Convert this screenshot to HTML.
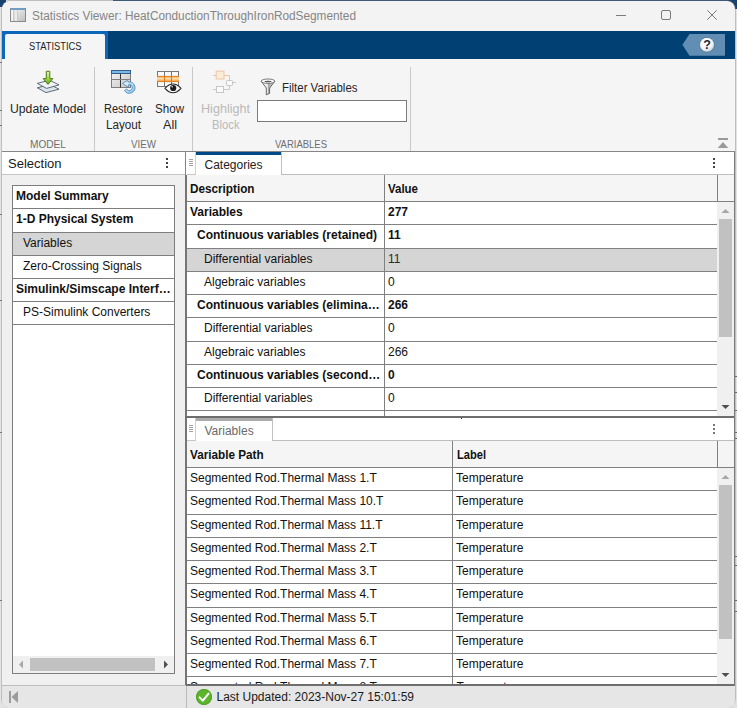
<!DOCTYPE html>
<html>
<head>
<meta charset="utf-8">
<title>Statistics Viewer</title>
<style>
*{box-sizing:border-box;margin:0;padding:0}
html,body{width:737px;height:708px;overflow:hidden;background:#e3e3e3;font-family:"Liberation Sans",sans-serif;font-size:12px;color:#1a1a1a}
.a{position:absolute;display:block}
.t{position:absolute;white-space:nowrap;transform-origin:0 50%}
svg{overflow:visible}
</style>
</head>
<body>
<div class="a" style="left:0px;top:0px;width:737px;height:708px;background:#e3e3e3;"></div>
<div class="a" style="left:0px;top:0px;width:6px;height:7px;background:#17426d;"></div>
<div class="a" style="left:113px;top:0px;width:624px;height:1px;background:#1c4a78;"></div>
<div class="a" style="left:728px;top:0px;width:9px;height:9px;background:#17426d;"></div>
<div class="a" style="left:0px;top:62px;width:2px;height:1px;background:#777;"></div>
<div class="a" style="left:0px;top:110px;width:2px;height:1px;background:#777;"></div>
<div class="a" style="left:0px;top:125px;width:2px;height:1px;background:#777;"></div>
<div class="a" style="left:0px;top:214px;width:2px;height:1px;background:#777;"></div>
<div class="a" style="left:0px;top:300px;width:2px;height:1px;background:#777;"></div>
<div class="a" style="left:0px;top:432px;width:2px;height:1px;background:#777;"></div>
<div class="a" style="left:0px;top:600px;width:2px;height:1px;background:#777;"></div>
<div class="a" style="left:735px;top:376px;width:2px;height:1px;background:#666;"></div>
<div class="a" style="left:735px;top:392px;width:2px;height:1px;background:#666;"></div>
<div class="a" style="left:735px;top:410px;width:2px;height:1px;background:#666;"></div>
<div class="a" style="left:735px;top:432px;width:2px;height:1px;background:#666;"></div>
<div class="a" style="left:735px;top:438px;width:2px;height:1px;background:#666;"></div>
<div class="a" style="left:735px;top:556px;width:2px;height:1px;background:#666;"></div>
<div class="a" style="left:735px;top:565px;width:2px;height:1px;background:#666;"></div>
<div class="a" style="left:735px;top:600px;width:2px;height:1px;background:#666;"></div>
<div class="a" style="left:735px;top:611px;width:2px;height:1px;background:#666;"></div>
<div class="a" style="left:2px;top:1px;width:733px;height:707px;background:#f3f3f3;border-radius:8px 8px 9px 9px;box-shadow:0 0 0 1px rgba(120,120,120,.35)"></div>
<svg class="a" style="left:9px;top:7px" width="18" height="16" viewBox="0 0 18 16">
<defs><linearGradient id="ti" x1="0" y1="0" x2="1" y2="1"><stop offset="0" stop-color="#fafafa"/><stop offset="1" stop-color="#bdbdbd"/></linearGradient></defs>
<rect x="1.5" y="1.5" width="15" height="13" fill="url(#ti)" stroke="#8a8a8a"/>
<rect x="1.5" y="1" width="15" height="2" fill="#6f9cc4"/>
<rect x="2.5" y="3.5" width="2" height="10.5" fill="#f6f6f6"/><rect x="4.5" y="3.5" width="1" height="10.5" fill="#a8a8a8"/><rect x="5.5" y="3.5" width="2.5" height="10.5" fill="#ececec"/><rect x="8" y="3.5" width="1" height="10.5" fill="#c8c8c8"/>
</svg>
<div class="t " style="left:32.00px;top:8.84px;font-size:12px;line-height:14px;color:#858585;transform:scaleX(0.9839)">Statistics Viewer: HeatConductionThroughIronRodSegmented</div>
<svg class="a" style="left:606px;top:0" width="129" height="31" viewBox="0 0 129 31">
<path d="M10 15.5H20" stroke="#7a7a7a" stroke-width="1" fill="none"/>
<rect x="55.5" y="10.5" width="9" height="9" rx="1.5" fill="none" stroke="#7a7a7a" stroke-width="1"/>
<path d="M101.3 10.3L110.7 19.7M110.7 10.3L101.3 19.7" stroke="#7a7a7a" stroke-width="1" fill="none"/>
</svg>
<div class="a" style="left:2px;top:31px;width:733px;height:28px;background:#004073;"></div>
<div class="a" style="left:2px;top:31px;width:106px;height:28px;background:#0f67bc;"></div>
<div class="a" style="left:5px;top:34px;width:100px;height:25px;background:#f5f5f5;border-radius:2px 2px 0 0"></div>
<div class="t " style="left:28.50px;top:39.69px;font-size:11px;line-height:13px;color:#1f1f1f;transform:scaleX(0.8477)">STATISTICS</div>
<svg class="a" style="left:680px;top:32px" width="48" height="26" viewBox="0 0 48 26">
<defs><radialGradient id="hg" cx="0.4" cy="0.3" r="0.8"><stop offset="0" stop-color="#ffffff"/><stop offset="0.6" stop-color="#f2f5f7"/><stop offset="1" stop-color="#a9bccb"/></radialGradient></defs>
<path d="M2.4 12.8L9.5 2H45V23.7H9.5Z" fill="#628eb4"/>
<circle cx="27" cy="12.8" r="7.4" fill="url(#hg)" stroke="#3b5f80" stroke-width="0.6"/>
<text x="27" y="17.3" font-family="Liberation Sans, sans-serif" font-weight="bold" font-size="12.5" text-anchor="middle" fill="#16273a">?</text>
</svg>
<div class="a" style="left:2px;top:59px;width:733px;height:92px;background:#f5f5f5;"></div>
<div class="a" style="left:2px;top:151px;width:733px;height:1px;background:#858585;"></div>
<div class="a" style="left:94px;top:67px;width:1px;height:84px;background:#c8c8c8;"></div>
<div class="a" style="left:192px;top:67px;width:1px;height:84px;background:#c8c8c8;"></div>
<div class="a" style="left:410px;top:67px;width:1px;height:84px;background:#c8c8c8;"></div>
<div class="t " style="left:10.00px;top:101.84px;font-size:12px;line-height:14px;color:#262626;transform:scaleX(1.0172)">Update Model</div>
<div class="t " style="left:104.00px;top:101.84px;font-size:12px;line-height:14px;color:#262626;transform:scaleX(0.9163)">Restore</div>
<div class="t " style="left:106.00px;top:117.84px;font-size:12px;line-height:14px;color:#262626;transform:scaleX(0.9714)">Layout</div>
<div class="t " style="left:155.00px;top:101.84px;font-size:12px;line-height:14px;color:#262626;transform:scaleX(0.9661)">Show</div>
<div class="t " style="left:162.50px;top:117.84px;font-size:12px;line-height:14px;color:#262626;transform:scaleX(1.0497)">All</div>
<div class="t " style="left:201.00px;top:101.84px;font-size:12px;line-height:14px;color:#b9b9b9;transform:scaleX(1.0494)">Highlight</div>
<div class="t " style="left:212.00px;top:117.84px;font-size:12px;line-height:14px;color:#b9b9b9;transform:scaleX(0.9371)">Block</div>
<div class="t " style="left:282.00px;top:80.84px;font-size:12px;line-height:14px;color:#262626;transform:scaleX(0.9540)">Filter Variables</div>
<div class="t " style="left:30.00px;top:137.69px;font-size:11px;line-height:13px;color:#6e6e6e;transform:scaleX(0.9203)">MODEL</div>
<div class="t " style="left:131.00px;top:137.69px;font-size:11px;line-height:13px;color:#6e6e6e;transform:scaleX(0.8893)">VIEW</div>
<div class="t " style="left:275.00px;top:137.69px;font-size:11px;line-height:13px;color:#6e6e6e;transform:scaleX(0.8620)">VARIABLES</div>
<div class="a" style="left:257px;top:100px;width:150px;height:22px;background:#fff;border:1px solid #7a7a7a"></div>
<svg class="a" style="left:34px;top:68px" width="28" height="28" viewBox="34 68 28 28">
<defs><linearGradient id="ga" x1="0" y1="0" x2="0" y2="1"><stop offset="0" stop-color="#eaf7c8"/><stop offset="0.55" stop-color="#a6d64a"/><stop offset="1" stop-color="#5aa51e"/></linearGradient></defs>
<path d="M37.3 87.8L46 92.6L59 89.2L50 84.5Z" fill="#dde6ec" stroke="#3a4a58" stroke-width="0.8" stroke-linejoin="round"/>
<path d="M37.3 83.4L46.6 88.4L59 84.9L49.5 80.2Z" fill="#f1f5f8" stroke="#3a4a58" stroke-width="0.8" stroke-linejoin="round"/>
<path d="M46.3 71.3H49.8V78.6H52.8L48 84.4L43.2 78.6H46.3Z" fill="url(#ga)" stroke="#4d7a10" stroke-width="1" stroke-linejoin="round"/>
</svg>
<svg class="a" style="left:108px;top:68px" width="30" height="28" viewBox="108 68 30 28">
<defs><linearGradient id="gc" x1="0" y1="0" x2="1" y2="1"><stop offset="0" stop-color="#f6f6f6"/><stop offset="1" stop-color="#c4c4c4"/></linearGradient>
<linearGradient id="gr" x1="0" y1="0" x2="1" y2="1"><stop offset="0" stop-color="#f2fafe"/><stop offset="1" stop-color="#86c0e4"/></linearGradient></defs>
<rect x="111.5" y="70.5" width="19" height="17" fill="url(#gc)" stroke="#7e7e7e"/>
<rect x="111.5" y="70.5" width="19" height="3" fill="#7fb7e4" stroke="#2e5f8e"/>
<path d="M120.5 74V87.5" stroke="#333" stroke-width="1"/>
<path d="M112 79.5H130.5" stroke="#7e7e7e" stroke-width="1"/>
<path d="M128.3 82.1A5.6 5.6 0 1 1 124.5 90.4L126.7 89.1A3.0 3.0 0 1 0 128.8 84.6L128.2 87.3L122.4 83.4L127.5 80.5Z" fill="url(#gr)" stroke="#3f82b8" stroke-width="0.8" stroke-linejoin="round"/>
</svg>
<svg class="a" style="left:154px;top:68px" width="30" height="28" viewBox="154 68 30 28">
<defs><linearGradient id="go" x1="0" y1="0" x2="0" y2="1"><stop offset="0" stop-color="#f39a3a"/><stop offset="0.45" stop-color="#fde0b0"/><stop offset="1" stop-color="#ee8a22"/></linearGradient></defs>
<rect x="157.5" y="71.5" width="21" height="15" fill="#f7f9fb" stroke="#777"/>
<path d="M164.5 71.5V86.5M171.5 71.5V86.5" stroke="#777"/>
<rect x="157" y="76" width="22" height="6" fill="url(#go)"/><path d="M157 76.4H179M157 81.6H179" stroke="#de7a14" stroke-width="0.8"/>
<path d="M164.5 76V82M171.5 76V82" stroke="#de7a14"/>
<path d="M165 88.3Q173 79.7 181 88.3Q173 97.1 165 88.3Z" fill="#fafafa" stroke="#222" stroke-width="1.1" stroke-linejoin="round"/>
<circle cx="173.2" cy="88" r="3.1" fill="#1d1d1d"/>
<circle cx="172.2" cy="86.8" r="0.8" fill="#ddd"/>
</svg>
<svg class="a" style="left:210px;top:68px" width="30" height="28" viewBox="210 68 30 28">
<path d="M213 75.5H216M213 89.5H216M233 82.5H236" stroke="#c9c9c9" stroke-width="1"/>
<path d="M224 75.5H229.5V80.5" stroke="#ecc3a6" stroke-width="1" fill="none"/>
<path d="M224 89.5H229.5V85.5" stroke="#c9c9c9" stroke-width="1" fill="none"/>
<rect x="216.2" y="71.2" width="7.8" height="7.8" fill="#fbecd9" stroke="#f0c8a8" stroke-width="1.1"/>
<rect x="226.5" y="80.5" width="6" height="5" rx="0.8" fill="#fafafa" stroke="#c6c6c6"/>
<rect x="216.5" y="86.5" width="7" height="6" fill="#fafafa" stroke="#c6c6c6"/>
</svg>
<svg class="a" style="left:259px;top:77px" width="18" height="20" viewBox="259 77 18 20">
<defs><linearGradient id="gf" x1="0" y1="0" x2="1" y2="0"><stop offset="0" stop-color="#ffffff"/><stop offset="0.5" stop-color="#e4e4e4"/><stop offset="0.52" stop-color="#a8a8a8"/><stop offset="1" stop-color="#e0e0e0"/></linearGradient></defs>
<path d="M261.2 81.3L266.3 88V94.8L269.6 93.4V88L274.8 81.3Z" fill="url(#gf)" stroke="#5a5a5a" stroke-width="0.9" stroke-linejoin="round"/>
<ellipse cx="268" cy="81.2" rx="6.8" ry="2.2" fill="#fdfdfd" stroke="#6a6a6a" stroke-width="0.9"/>
<ellipse cx="268" cy="81.5" rx="3.6" ry="0.7" fill="#555"/>
</svg>
<svg class="a" style="left:716px;top:136px" width="14" height="14" viewBox="716 136 14 14"><rect x="718" y="138" width="10" height="2" fill="#9a9a9a"/><path d="M723 142L728.3 148H717.7Z" fill="#9a9a9a"/></svg>
<div class="a" style="left:2px;top:152px;width:183px;height:22px;background:#fff;"></div>
<div class="a" style="left:2px;top:174px;width:183px;height:1px;background:#c6c6c6;"></div>
<div class="a" style="left:2px;top:175px;width:183px;height:510px;background:#f0f0f0;"></div>
<div class="t" style="left:8px;top:155.50px;font-size:13px;line-height:16px;color:#1a1a1a;">Selection</div>
<div class="a" style="left:166px;top:158px;width:2px;height:2px;background:#444;"></div>
<div class="a" style="left:166px;top:162px;width:2px;height:2px;background:#444;"></div>
<div class="a" style="left:166px;top:166px;width:2px;height:2px;background:#444;"></div>
<div class="a" style="left:12px;top:185px;width:163px;height:489px;background:#fff;border:1px solid #7d7d7d"></div>
<div class="a" style="left:13px;top:208px;width:161px;height:1px;background:#7d7d7d;"></div>
<div class="t" style="left:16px;top:188.84px;font-size:12px;line-height:14px;color:#111;font-weight:bold;">Model Summary</div>
<div class="a" style="left:13px;top:232px;width:161px;height:1px;background:#7d7d7d;"></div>
<div class="t" style="left:16px;top:211.84px;font-size:12px;line-height:14px;color:#111;font-weight:bold;">1-D Physical System</div>
<div class="a" style="left:13px;top:233px;width:161px;height:22px;background:#d5d5d5;"></div>
<div class="a" style="left:13px;top:255px;width:161px;height:1px;background:#7d7d7d;"></div>
<div class="t" style="left:23px;top:235.84px;font-size:12px;line-height:14px;color:#111;">Variables</div>
<div class="a" style="left:13px;top:278px;width:161px;height:1px;background:#7d7d7d;"></div>
<div class="t" style="left:23px;top:258.84px;font-size:12px;line-height:14px;color:#111;">Zero-Crossing Signals</div>
<div class="a" style="left:13px;top:301px;width:161px;height:1px;background:#7d7d7d;"></div>
<div class="t" style="left:16px;top:281.84px;font-size:12px;line-height:14px;color:#111;font-weight:bold;">Simulink/Simscape Interf…</div>
<div class="a" style="left:13px;top:324px;width:161px;height:1px;background:#7d7d7d;"></div>
<div class="t" style="left:23px;top:304.84px;font-size:12px;line-height:14px;color:#111;">PS-Simulink Converters</div>
<div class="a" style="left:13px;top:656px;width:161px;height:17px;background:#f0f0f0;"></div>
<div class="a" style="left:30px;top:658px;width:125px;height:13px;background:#c1c1c1;"></div>
<svg class="a" style="left:13px;top:656px" width="161" height="17" viewBox="13 656 161 17"><path d="M23 660.5V668.5L19 664.5Z" fill="#a9a9a9"/><path d="M164 660.5V668.5L168 664.5Z" fill="#505050"/></svg>
<div class="a" style="left:185px;top:152px;width:550px;height:533px;background:#fff;"></div>
<div class="a" style="left:185px;top:152px;width:1px;height:23px;background:#858585;"></div>
<div class="a" style="left:185px;top:175px;width:2px;height:510px;background:#757575;"></div>
<div class="a" style="left:189px;top:159px;width:4px;height:1px;background:#a2a2a2;"></div>
<div class="a" style="left:189px;top:161px;width:4px;height:1px;background:#a2a2a2;"></div>
<div class="a" style="left:189px;top:163px;width:4px;height:1px;background:#a2a2a2;"></div>
<div class="a" style="left:189px;top:165px;width:4px;height:1px;background:#a2a2a2;"></div>
<div class="a" style="left:195px;top:152px;width:1px;height:22px;background:#d0d0d0;"></div>
<div class="a" style="left:187px;top:174px;width:9px;height:1px;background:#c6c6c6;"></div>
<div class="a" style="left:196px;top:152px;width:85px;height:3px;background:#004a87;"></div>
<div class="a" style="left:281px;top:152px;width:1px;height:23px;background:#c0c0c0;"></div>
<div class="a" style="left:281px;top:174px;width:454px;height:1px;background:#bdbdbd;"></div>
<div class="t" style="left:204.5px;top:157.84px;font-size:12px;line-height:14px;color:#222;">Categories</div>
<div class="a" style="left:713px;top:158px;width:2px;height:2px;background:#444;"></div>
<div class="a" style="left:713px;top:162px;width:2px;height:2px;background:#444;"></div>
<div class="a" style="left:713px;top:166px;width:2px;height:2px;background:#444;"></div>
<div class="a" style="left:187px;top:175px;width:547px;height:26px;background:#f5f5f5;"></div>
<div class="a" style="left:187px;top:201px;width:547px;height:1px;background:#808080;"></div>
<div class="a" style="left:384px;top:175px;width:1px;height:241px;background:#808080;"></div>
<div class="a" style="left:717px;top:175px;width:1px;height:26px;background:#808080;"></div>
<div class="a" style="left:734px;top:175px;width:1px;height:26px;background:#9a9a9a;"></div>
<div class="t " style="left:190.00px;top:182.14px;font-size:12px;line-height:14px;color:#111;font-weight:bold;transform:scaleX(0.9771)">Description</div>
<div class="t " style="left:388.30px;top:182.14px;font-size:12px;line-height:14px;color:#111;font-weight:bold;transform:scaleX(0.9568)">Value</div>
<div class="a" style="left:187px;top:224px;width:530px;height:1px;background:#808080;"></div>
<div class="t" style="left:190px;top:204.84px;font-size:12px;line-height:14px;color:#111;font-weight:bold;">Variables</div>
<div class="t" style="left:388px;top:204.84px;font-size:12px;line-height:14px;color:#111;font-weight:bold;">277</div>
<div class="a" style="left:187px;top:248px;width:530px;height:1px;background:#808080;"></div>
<div class="t" style="left:197px;top:227.84px;font-size:12px;line-height:14px;color:#111;font-weight:bold;">Continuous variables (retained)</div>
<div class="t" style="left:388px;top:227.84px;font-size:12px;line-height:14px;color:#111;font-weight:bold;">11</div>
<div class="a" style="left:187px;top:249px;width:530px;height:22px;background:#d5d5d5;"></div>
<div class="a" style="left:384px;top:249px;width:1px;height:22px;background:#808080;"></div>
<div class="a" style="left:187px;top:271px;width:530px;height:1px;background:#808080;"></div>
<div class="t" style="left:204px;top:251.84px;font-size:12px;line-height:14px;color:#111;">Differential variables</div>
<div class="t" style="left:388px;top:251.84px;font-size:12px;line-height:14px;color:#2a2a2a;">11</div>
<div class="a" style="left:187px;top:294px;width:530px;height:1px;background:#808080;"></div>
<div class="t" style="left:204px;top:274.84px;font-size:12px;line-height:14px;color:#111;">Algebraic variables</div>
<div class="t" style="left:388px;top:274.84px;font-size:12px;line-height:14px;color:#111;">0</div>
<div class="a" style="left:187px;top:317px;width:530px;height:1px;background:#808080;"></div>
<div class="t" style="left:197px;top:297.84px;font-size:12px;line-height:14px;color:#111;font-weight:bold;">Continuous variables (elimina…</div>
<div class="t" style="left:388px;top:297.84px;font-size:12px;line-height:14px;color:#111;font-weight:bold;">266</div>
<div class="a" style="left:187px;top:341px;width:530px;height:1px;background:#808080;"></div>
<div class="t" style="left:204px;top:320.84px;font-size:12px;line-height:14px;color:#111;">Differential variables</div>
<div class="t" style="left:388px;top:320.84px;font-size:12px;line-height:14px;color:#111;">0</div>
<div class="a" style="left:187px;top:364px;width:530px;height:1px;background:#808080;"></div>
<div class="t" style="left:204px;top:344.84px;font-size:12px;line-height:14px;color:#111;">Algebraic variables</div>
<div class="t" style="left:388px;top:344.84px;font-size:12px;line-height:14px;color:#111;">266</div>
<div class="a" style="left:187px;top:387px;width:530px;height:1px;background:#808080;"></div>
<div class="t" style="left:197px;top:367.84px;font-size:12px;line-height:14px;color:#111;font-weight:bold;">Continuous variables (second…</div>
<div class="t" style="left:388px;top:367.84px;font-size:12px;line-height:14px;color:#111;font-weight:bold;">0</div>
<div class="a" style="left:187px;top:410px;width:530px;height:1px;background:#808080;"></div>
<div class="t" style="left:204px;top:390.84px;font-size:12px;line-height:14px;color:#111;">Differential variables</div>
<div class="t" style="left:388px;top:390.84px;font-size:12px;line-height:14px;color:#111;">0</div>
<div class="a" style="left:187px;top:411px;width:530px;height:5px;overflow:hidden;background:#fff"><div class="t" style="left:17px;top:3px;font-size:12px;line-height:14px;color:#111">Algebraic variables</div><div class="t" style="left:201px;top:3px;font-size:12px;line-height:14px;color:#111">0</div><div class="a" style="left:197px;top:0;width:1px;height:5px;background:#808080"></div></div>
<div class="a" style="left:717px;top:202px;width:17px;height:214px;background:#f0f0f0;"></div>
<div class="a" style="left:719px;top:219px;width:13px;height:118px;background:#c1c1c1;"></div>
<svg class="a" style="left:718px;top:202px" width="16" height="214" viewBox="718 202 16 214"><path d="M721.5 213L725.5 209L729.5 213Z" fill="#a6a6a6"/><path d="M721.5 405L729.5 405L725.5 409Z" fill="#505050"/></svg>
<div class="a" style="left:185px;top:416px;width:550px;height:2px;background:#6e6e6e;"></div>
<div class="a" style="left:461px;top:418px;width:1px;height:1px;background:#333;"></div>
<div class="a" style="left:189px;top:425px;width:4px;height:1px;background:#a2a2a2;"></div>
<div class="a" style="left:189px;top:427px;width:4px;height:1px;background:#a2a2a2;"></div>
<div class="a" style="left:189px;top:429px;width:4px;height:1px;background:#a2a2a2;"></div>
<div class="a" style="left:189px;top:431px;width:4px;height:1px;background:#a2a2a2;"></div>
<div class="a" style="left:195px;top:418px;width:1px;height:22px;background:#d0d0d0;"></div>
<div class="a" style="left:187px;top:440px;width:9px;height:1px;background:#c6c6c6;"></div>
<div class="a" style="left:196px;top:418px;width:76px;height:3px;background:#ababab;"></div>
<div class="a" style="left:272px;top:418px;width:1px;height:23px;background:#c0c0c0;"></div>
<div class="a" style="left:272px;top:440px;width:463px;height:1px;background:#bdbdbd;"></div>
<div class="t" style="left:204.5px;top:423.84px;font-size:12px;line-height:14px;color:#6a6a6a;">Variables</div>
<div class="a" style="left:713px;top:424px;width:2px;height:2px;background:#777;"></div>
<div class="a" style="left:713px;top:428px;width:2px;height:2px;background:#777;"></div>
<div class="a" style="left:713px;top:432px;width:2px;height:2px;background:#777;"></div>
<div class="a" style="left:187px;top:441px;width:547px;height:26px;background:#f5f5f5;"></div>
<div class="a" style="left:187px;top:467px;width:547px;height:1px;background:#808080;"></div>
<div class="a" style="left:452px;top:441px;width:1px;height:243px;background:#808080;"></div>
<div class="a" style="left:717px;top:441px;width:1px;height:26px;background:#808080;"></div>
<div class="a" style="left:734px;top:441px;width:1px;height:26px;background:#9a9a9a;"></div>
<div class="t " style="left:190.30px;top:448.14px;font-size:12px;line-height:14px;color:#111;font-weight:bold;transform:scaleX(0.9765)">Variable Path</div>
<div class="t " style="left:456.50px;top:448.14px;font-size:12px;line-height:14px;color:#111;font-weight:bold;transform:scaleX(0.9253)">Label</div>
<div class="a" style="left:187px;top:490px;width:530px;height:1px;background:#808080;"></div>
<div class="t" style="left:190px;top:470.84px;font-size:12px;line-height:14px;color:#111;">Segmented Rod.Thermal Mass 1.T</div>
<div class="t" style="left:456px;top:470.84px;font-size:12px;line-height:14px;color:#111;">Temperature</div>
<div class="a" style="left:187px;top:514px;width:530px;height:1px;background:#808080;"></div>
<div class="t" style="left:190px;top:493.84px;font-size:12px;line-height:14px;color:#111;">Segmented Rod.Thermal Mass 10.T</div>
<div class="t" style="left:456px;top:493.84px;font-size:12px;line-height:14px;color:#111;">Temperature</div>
<div class="a" style="left:187px;top:537px;width:530px;height:1px;background:#808080;"></div>
<div class="t" style="left:190px;top:517.84px;font-size:12px;line-height:14px;color:#111;">Segmented Rod.Thermal Mass 11.T</div>
<div class="t" style="left:456px;top:517.84px;font-size:12px;line-height:14px;color:#111;">Temperature</div>
<div class="a" style="left:187px;top:560px;width:530px;height:1px;background:#808080;"></div>
<div class="t" style="left:190px;top:540.84px;font-size:12px;line-height:14px;color:#111;">Segmented Rod.Thermal Mass 2.T</div>
<div class="t" style="left:456px;top:540.84px;font-size:12px;line-height:14px;color:#111;">Temperature</div>
<div class="a" style="left:187px;top:583px;width:530px;height:1px;background:#808080;"></div>
<div class="t" style="left:190px;top:563.84px;font-size:12px;line-height:14px;color:#111;">Segmented Rod.Thermal Mass 3.T</div>
<div class="t" style="left:456px;top:563.84px;font-size:12px;line-height:14px;color:#111;">Temperature</div>
<div class="a" style="left:187px;top:607px;width:530px;height:1px;background:#808080;"></div>
<div class="t" style="left:190px;top:586.84px;font-size:12px;line-height:14px;color:#111;">Segmented Rod.Thermal Mass 4.T</div>
<div class="t" style="left:456px;top:586.84px;font-size:12px;line-height:14px;color:#111;">Temperature</div>
<div class="a" style="left:187px;top:630px;width:530px;height:1px;background:#808080;"></div>
<div class="t" style="left:190px;top:610.84px;font-size:12px;line-height:14px;color:#111;">Segmented Rod.Thermal Mass 5.T</div>
<div class="t" style="left:456px;top:610.84px;font-size:12px;line-height:14px;color:#111;">Temperature</div>
<div class="a" style="left:187px;top:653px;width:530px;height:1px;background:#808080;"></div>
<div class="t" style="left:190px;top:633.84px;font-size:12px;line-height:14px;color:#111;">Segmented Rod.Thermal Mass 6.T</div>
<div class="t" style="left:456px;top:633.84px;font-size:12px;line-height:14px;color:#111;">Temperature</div>
<div class="a" style="left:187px;top:676px;width:530px;height:1px;background:#808080;"></div>
<div class="t" style="left:190px;top:656.84px;font-size:12px;line-height:14px;color:#111;">Segmented Rod.Thermal Mass 7.T</div>
<div class="t" style="left:456px;top:656.84px;font-size:12px;line-height:14px;color:#111;">Temperature</div>
<div class="a" style="left:187px;top:677px;width:530px;height:7px;overflow:hidden;background:#fff"><div class="t" style="left:3px;top:3px;font-size:12px;line-height:14px;color:#111">Segmented Rod.Thermal Mass 8.T</div><div class="t" style="left:269.5px;top:3px;font-size:12px;line-height:14px;color:#111">Temperature</div><div class="a" style="left:265px;top:0;width:1px;height:7px;background:#808080"></div></div>
<div class="a" style="left:717px;top:468px;width:17px;height:216px;background:#f0f0f0;"></div>
<div class="a" style="left:719px;top:485px;width:13px;height:154px;background:#c1c1c1;"></div>
<svg class="a" style="left:718px;top:468px" width="16" height="216" viewBox="718 468 16 216"><path d="M721.5 479L725.5 475L729.5 479Z" fill="#a6a6a6"/><path d="M721.5 673L729.5 673L725.5 677Z" fill="#505050"/></svg>
<div class="a" style="left:185px;top:684px;width:550px;height:2px;background:#6e6e6e;"></div>
<div class="a" style="left:734px;top:152px;width:1px;height:534px;background:#7a7a7a;"></div>
<div class="a" style="left:2px;top:686px;width:733px;height:22px;background:#e6e6e6;border-radius:0 0 7px 7px"></div>
<div class="a" style="left:2px;top:685px;width:184px;height:1px;background:#bdbdbd;"></div>
<div class="a" style="left:186px;top:686px;width:1px;height:22px;background:#b9b9b9;"></div>
<svg class="a" style="left:7px;top:689px" width="14" height="16" viewBox="7 689 14 16"><rect x="9" y="691" width="2" height="12" fill="#9c9c9c"/><path d="M18 691V703L11.5 697Z" fill="#9c9c9c"/></svg>
<svg class="a" style="left:194px;top:687px" width="20" height="20" viewBox="194 687 20 20"><circle cx="204" cy="697" r="8" fill="#5cb52c"/><circle cx="204" cy="697" r="7.5" fill="none" stroke="#4a9a22" stroke-width="0.8"/><path d="M199.6 697.4L202.8 700.6L208.6 693.6" fill="none" stroke="#fff" stroke-width="2" stroke-linecap="round" stroke-linejoin="round"/></svg>
<div class="t" style="left:216.5px;top:689.84px;font-size:12px;line-height:14px;color:#1a1a1a;">Last Updated: 2023-Nov-27 15:01:59</div>
</body>
</html>
